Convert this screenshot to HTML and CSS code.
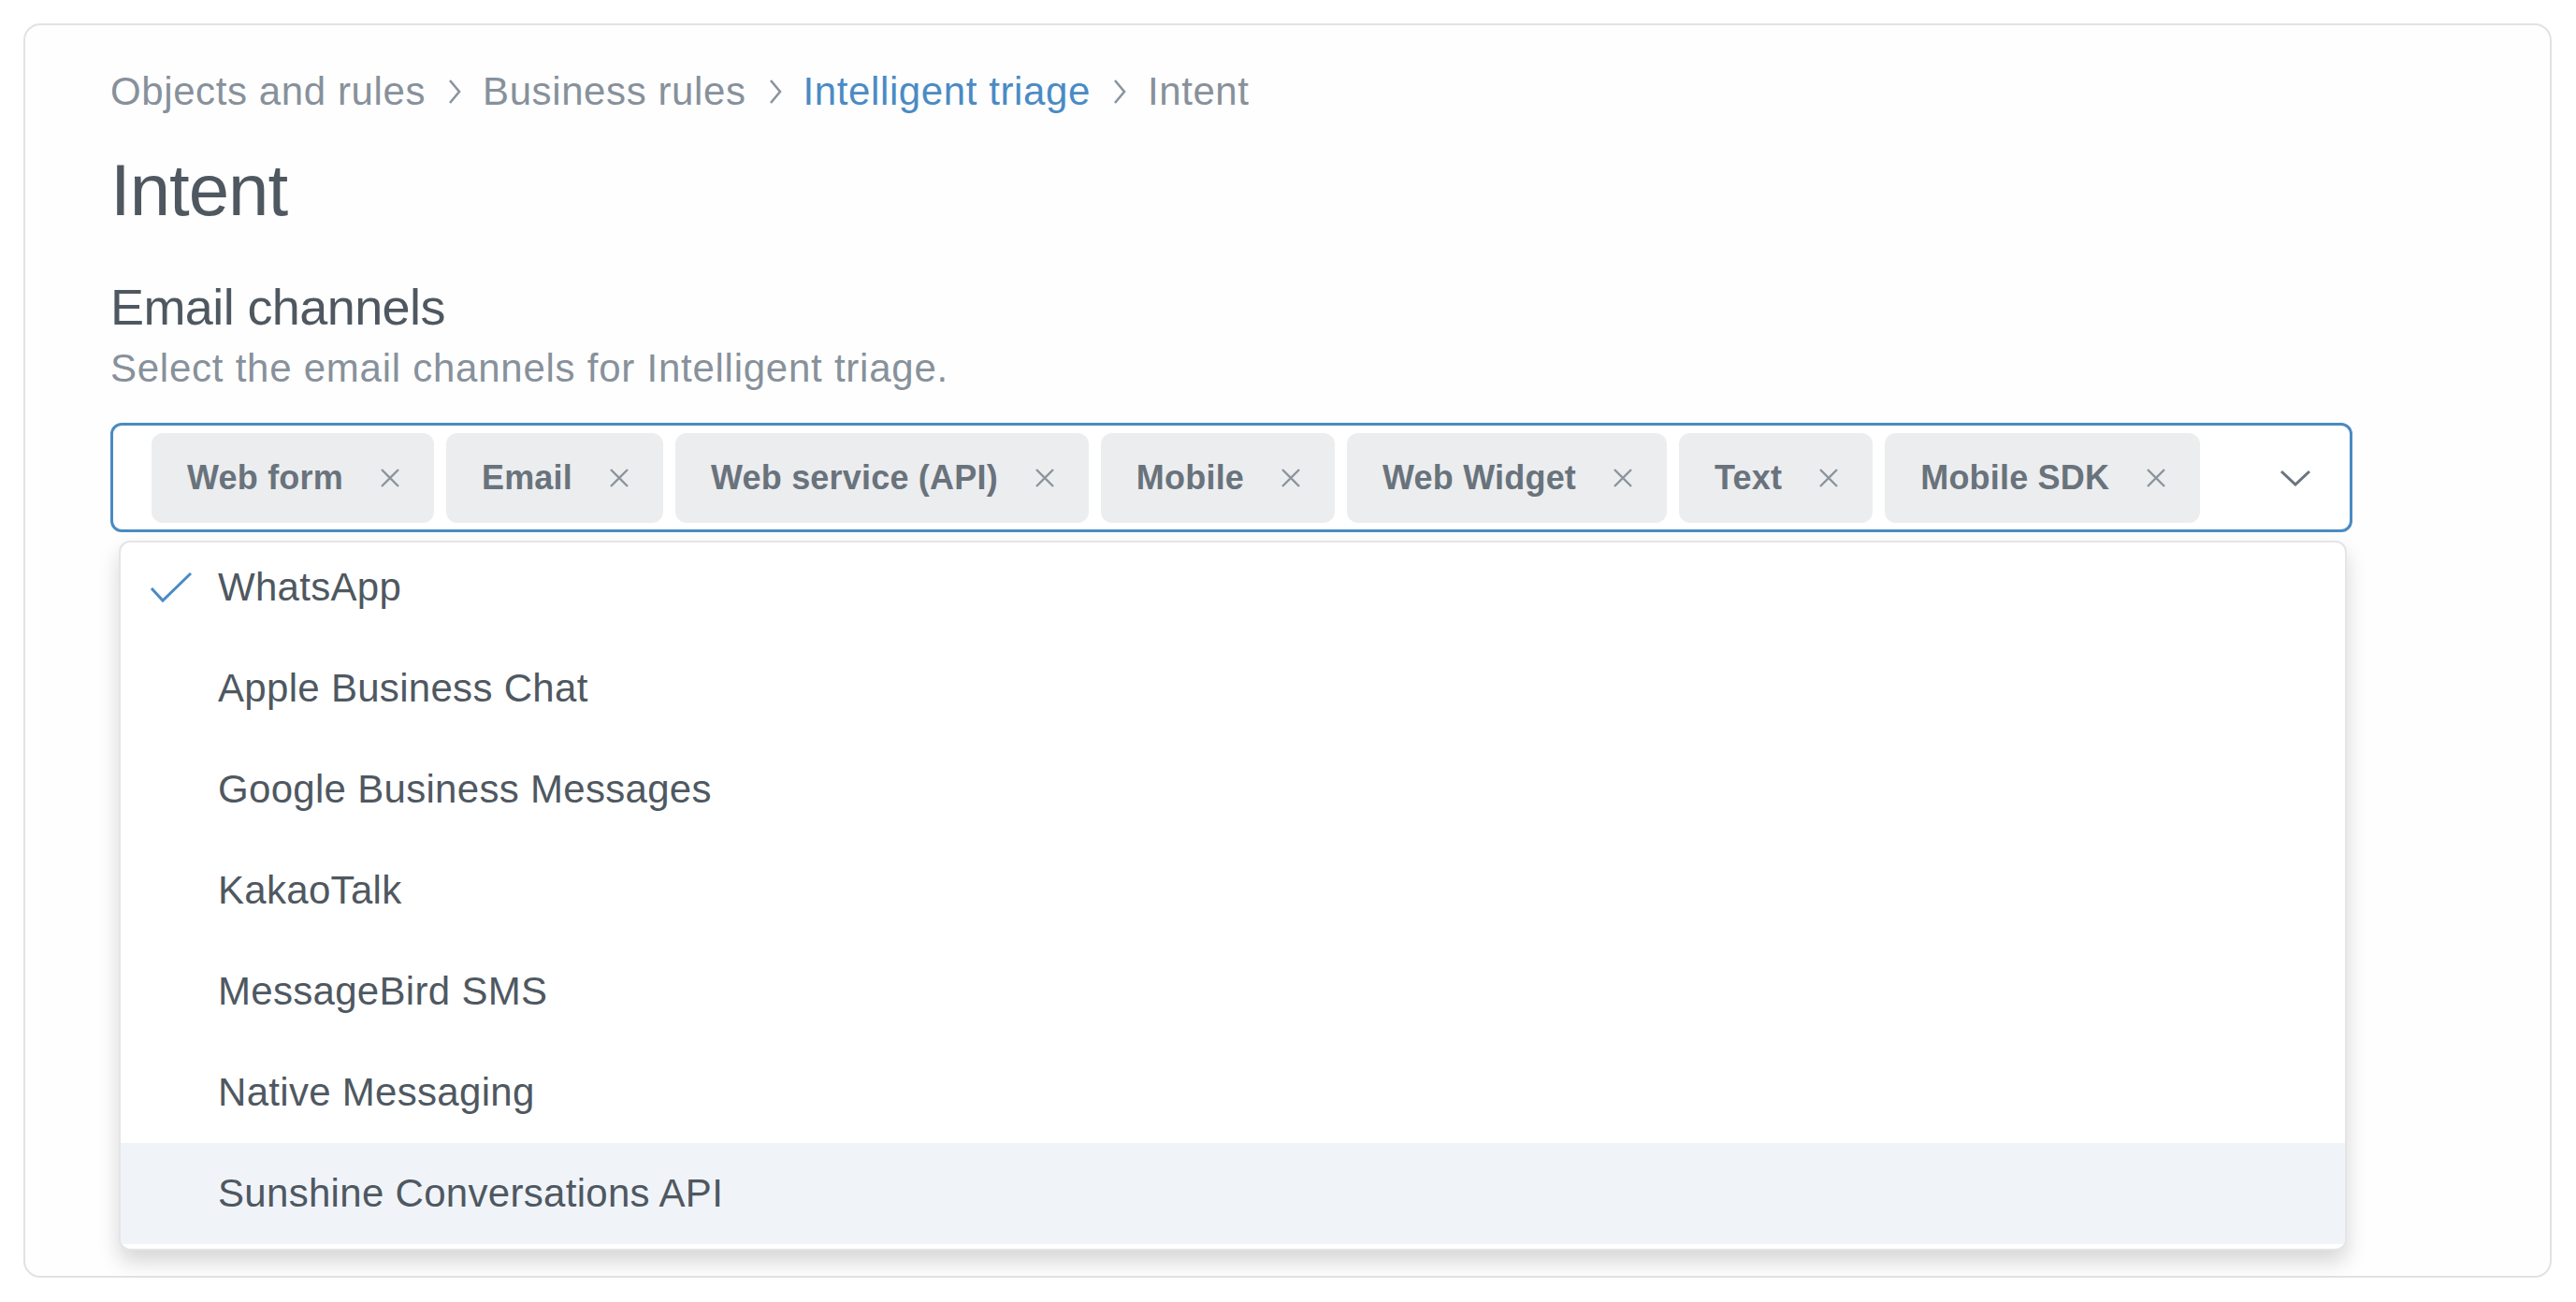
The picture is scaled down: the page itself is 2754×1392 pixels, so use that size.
FILE: index.html
```html
<!DOCTYPE html>
<html lang="en">
<head>
<meta charset="utf-8">
<title>Intent</title>
<link rel="stylesheet" href="styles.css">
</head>
<body>
<div class="card">
  <nav class="breadcrumb">
    <span class="crumb">Objects and rules</span>
    <svg class="sep" viewBox="0 0 14 28"><polyline points="2,2 12,14 2,26"/></svg>
    <span class="crumb">Business rules</span>
    <svg class="sep" viewBox="0 0 14 28"><polyline points="2,2 12,14 2,26"/></svg>
    <span class="crumb link">Intelligent triage</span>
    <svg class="sep" viewBox="0 0 14 28"><polyline points="2,2 12,14 2,26"/></svg>
    <span class="crumb">Intent</span>
  </nav>
  <h1 class="title">Intent</h1>
  <h2 class="heading">Email channels</h2>
  <p class="hint">Select the email channels for Intelligent triage.</p>

  <div class="combo">
    <div class="tags">
      <span class="tag"><span class="tag-text">Web form</span><svg class="x" viewBox="0 0 22 22"><path d="M2 2L20 20M20 2L2 20"/></svg></span>
      <span class="tag"><span class="tag-text">Email</span><svg class="x" viewBox="0 0 22 22"><path d="M2 2L20 20M20 2L2 20"/></svg></span>
      <span class="tag"><span class="tag-text">Web service (API)</span><svg class="x" viewBox="0 0 22 22"><path d="M2 2L20 20M20 2L2 20"/></svg></span>
      <span class="tag"><span class="tag-text">Mobile</span><svg class="x" viewBox="0 0 22 22"><path d="M2 2L20 20M20 2L2 20"/></svg></span>
      <span class="tag"><span class="tag-text">Web Widget</span><svg class="x" viewBox="0 0 22 22"><path d="M2 2L20 20M20 2L2 20"/></svg></span>
      <span class="tag"><span class="tag-text">Text</span><svg class="x" viewBox="0 0 22 22"><path d="M2 2L20 20M20 2L2 20"/></svg></span>
      <span class="tag"><span class="tag-text">Mobile SDK</span><svg class="x" viewBox="0 0 22 22"><path d="M2 2L20 20M20 2L2 20"/></svg></span>
    </div>
    <svg class="chev" viewBox="0 0 34 18"><polyline points="2,2 17,16 32,2"/></svg>
  </div>

  <div class="menu">
    <ul class="menu-list">
      <li class="item"><span class="slot"><svg class="check" viewBox="0 0 46 34"><polyline points="2,18 14,31 44,2"/></svg></span>WhatsApp</li>
      <li class="item"><span class="slot"></span>Apple Business Chat</li>
      <li class="item"><span class="slot"></span>Google Business Messages</li>
      <li class="item"><span class="slot"></span>KakaoTalk</li>
      <li class="item"><span class="slot"></span>MessageBird SMS</li>
      <li class="item"><span class="slot"></span>Native Messaging</li>
      <li class="item active"><span class="slot"></span>Sunshine Conversations API</li>
    </ul>
  </div>
</div>
</body>
</html>
```

FILE: styles.css
```css
html, body {
  margin: 0;
  padding: 0;
  background: #ffffff;
}
body {
  padding: 25px 26px 26px 25px;
  font-family: "Liberation Sans", Arial, sans-serif;
  overflow: hidden;
}
.card {
  box-sizing: border-box;
  width: 2703px;
  height: 1341px;
  border: 2px solid #e2e2e2;
  border-radius: 18px;
  background: #fefefe;
  padding: 41px 0 0 91px;
}
.breadcrumb {
  display: flex;
  align-items: center;
  height: 60px;
  font-size: 42px;
  line-height: 60px;
  color: #87919b;
  letter-spacing: 0.6px;
}
.crumb.link {
  color: #4a8bc4;
}
.sep {
  width: 14px;
  height: 28px;
  margin: 0 23px 0 24px;
  fill: none;
  stroke: #8a949d;
  stroke-width: 2.6;
}
.title {
  margin: 27px 0 0 0;
  font-size: 78px;
  line-height: 96px;
  font-weight: 400;
  color: #4f5860;
  letter-spacing: -1px;
}
.heading {
  margin: 41px 0 0 0;
  font-size: 54px;
  line-height: 72px;
  font-weight: 400;
  color: #4f5860;
  letter-spacing: -0.6px;
}
.hint {
  margin: 0;
  font-size: 42px;
  line-height: 60px;
  color: #87919b;
  letter-spacing: 0.75px;
}
.combo {
  box-sizing: border-box;
  margin-top: 28px;
  width: 2397px;
  height: 117px;
  border: 3px solid #4a8bc2;
  border-radius: 12px;
  display: flex;
  align-items: center;
  padding: 0 41px 0 41px;
  background: #ffffff;
}
.tags {
  display: flex;
  gap: 13px;
}
.tag {
  display: flex;
  align-items: center;
  height: 96px;
  box-sizing: border-box;
  padding: 0 36px 0 38px;
  border-radius: 12px;
  background: #ecedef;
  font-size: 36px;
  font-weight: 700;
  color: #69737c;
  letter-spacing: 0.2px;
}
.x {
  width: 22px;
  height: 22px;
  margin-left: 39px;
  fill: none;
  stroke: #8c949c;
  stroke-width: 2.4;
}
.chev {
  margin-left: auto;
  width: 34px;
  height: 18px;
  fill: none;
  stroke: #6c757e;
  stroke-width: 3;
}
.menu {
  box-sizing: border-box;
  margin: 9px 0 0 9px;
  width: 2382px;
  height: 759px;
  padding: 0 0 5px 0;
  border: 2px solid #e4e5e7;
  border-radius: 12px;
  background: #ffffff;
  box-shadow: 0 12px 22px rgba(0, 0, 0, 0.16);
  overflow: hidden;
}
.menu-list {
  list-style: none;
  margin: -6px 0 0 0;
  padding: 0;
}
.item {
  display: flex;
  align-items: center;
  height: 108px;
  font-size: 42px;
  color: #4f5861;
  letter-spacing: 0.3px;
}
.item.active {
  background: #f0f4f9;
}
.slot {
  box-sizing: border-box;
  width: 104px;
  padding-left: 31px;
  display: flex;
  align-items: center;
}
.check {
  width: 46px;
  height: 34px;
  fill: none;
  stroke: #4a8bc4;
  stroke-width: 3;
}
```
